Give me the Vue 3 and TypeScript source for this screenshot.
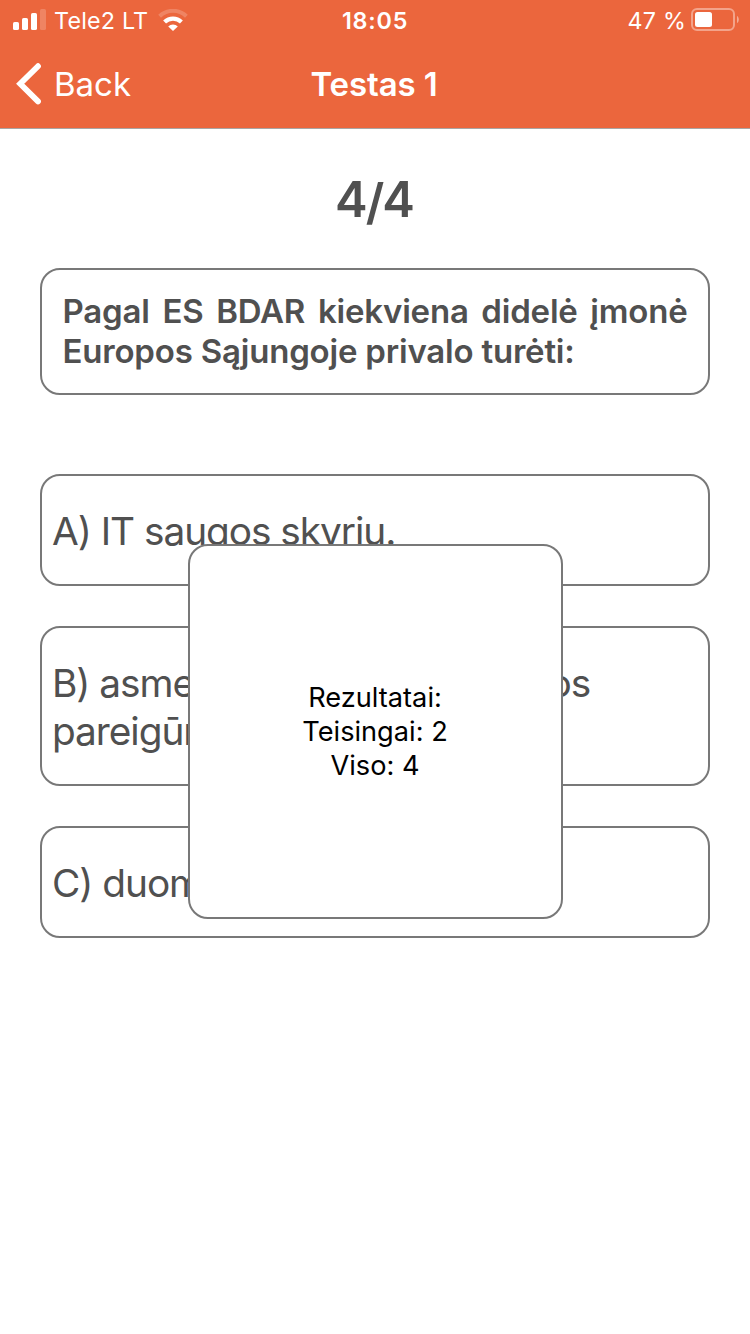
<script setup lang="ts">
interface Option {
  key: string
  label: string
}

const question = 'Pagal ES BDAR kiekviena didelė įmonė Europos Sąjungoje privalo turėti:'
const options: Option[] = [
  { key: 'A', label: 'IT saugos skyrių.' },
  { key: 'B', label: 'asmens duomenų apsaugos pareigūną.' },
  { key: 'C', label: 'duomenų bazę.' },
]
const results: string[] = ['Rezultatai:', 'Teisingai: 2', 'Viso: 4']
</script>

<template>
  <div class="screen">
    <header class="header">
      <div class="status">
        <div class="side">
          <svg class="signal" width="34" height="22" viewBox="0 0 34 22" fill="#fff">
            <rect x="0" y="13" width="6" height="8" rx="1.6" />
            <rect x="9" y="9" width="6" height="12" rx="1.6" />
            <rect x="18" y="4" width="6" height="17" rx="1.6" />
            <rect x="27" y="0" width="6" height="21" rx="1.6" opacity="0.2" />
          </svg>
          <span class="carrier">Tele2 LT</span>
          <svg class="wifi" width="30" height="22" viewBox="0 0 30 22" fill="none">
            <path d="M1.6 7.2 A19.3 19.3 0 0 1 28.4 7.2" stroke="#fff" stroke-width="4" opacity="0.2" />
            <path d="M6.6 13 A12.2 12.2 0 0 1 23.4 13" stroke="#fff" stroke-width="4.2" />
            <path d="M15 22 L10.2 17.6 A6.8 6.8 0 0 1 19.8 17.6 Z" fill="#fff" />
          </svg>
        </div>
        <span class="clock">18:05</span>
        <div class="side end">
          <span class="percent">47 %</span>
          <svg class="battery" width="48" height="24" viewBox="0 0 48 24">
            <rect x="1" y="1" width="42" height="21" rx="5" fill="none" stroke="#fff" stroke-width="2" opacity="0.4" />
            <rect x="4" y="4" width="17" height="15" rx="2.5" fill="#fff" />
            <path d="M46 8 C48.4 9 48.4 14 46 15 Z" fill="#fff" opacity="0.45" />
          </svg>
        </div>
      </div>
      <nav class="nav">
        <button class="back">
          <svg width="26" height="42" viewBox="0 0 26 42" fill="none">
            <path d="M22 3.2 L4.2 20.8 L22 38.4" stroke="#fff" stroke-width="5.8" stroke-linecap="round" stroke-linejoin="miter" />
          </svg>
          <span>Back</span>
        </button>
        <h1 class="title">Testas 1</h1>
        <span></span>
      </nav>
    </header>

    <main class="content">
      <div class="counter">4<span class="slash">/</span>4</div>
      <p class="question">{{ question }}</p>
      <div class="options">
        <div v-for="o in options" :key="o.key" class="option">{{ o.key }}) {{ o.label }}</div>
      </div>
    </main>

    <div class="modal">
      <span v-for="line in results" :key="line">{{ line }}</span>
    </div>
  </div>
</template>

<style>
body {
  margin: 0;
  background: #fff;
}
</style>

<style scoped>
.screen {
  position: relative;
  box-sizing: border-box;
  width: 750px;
  height: 1334px;
  overflow: hidden;
  background: #fff;
  color: #505050;
  font-family: Inter, 'Noto Sans', sans-serif;
}

.header {
  box-sizing: border-box;
  height: 129px;
  background: #eb663d;
  border-bottom: 1px solid #a9a5a4;
  color: #fff;
}

.status {
  display: grid;
  grid-template-columns: 1fr auto 1fr;
  height: 40px;
  font-size: 23.3px;
  line-height: 42px;
}

.side {
  display: flex;
  align-items: flex-start;
  padding-left: 13px;
  white-space: nowrap;
}

.end {
  justify-content: flex-end;
  padding: 0 11px 0 0;
}

.signal {
  margin-top: 9px;
}

.carrier {
  margin-left: 7px;
  letter-spacing: 0.2px;
}

.wifi {
  margin: 9px 0 0 10px;
}

.clock {
  font-weight: 600;
  letter-spacing: 0.8px;
}

.percent {
  margin-right: 5px;
  letter-spacing: 0.2px;
}

.battery {
  margin-top: 8px;
}

.nav {
  display: grid;
  grid-template-columns: 1fr auto 1fr;
  height: 88px;
  line-height: 88px;
}

.back {
  display: flex;
  align-items: center;
  gap: 12px;
  padding: 0 0 0 16px;
  border: 0;
  background: none;
  color: inherit;
  font: inherit;
  font-size: 33px;
  line-height: 88px;
}

.title {
  margin: 0;
  padding-right: 2px;
  font-size: 33px;
  font-weight: 600;
  letter-spacing: -0.1px;
}

.content {
  padding: 41px 40px 0;
}

.counter {
  height: 58px;
  padding-right: 2px;
  font-size: 49px;
  font-weight: 600;
  line-height: 60px;
  letter-spacing: -2px;
  text-align: center;
}

.slash {
  position: relative;
  top: 2px;
}

.question {
  box-sizing: border-box;
  height: 127px;
  margin: 40px 0 79px;
  padding: 21px 20.5px 0;
  border: 2px solid #787878;
  border-radius: 20px;
  font-size: 33px;
  font-weight: 600;
  line-height: 40px;
  letter-spacing: -0.2px;
  text-align: justify;
}

.options {
  display: flex;
  flex-direction: column;
  gap: 40.2px;
}

.option {
  padding: 31.3px 10px 29.3px;
  border: 2px solid #787878;
  border-radius: 20px;
  font-size: 38.8px;
  line-height: 47.4px;
  letter-spacing: -1.04px;
}

.modal {
  position: absolute;
  top: 544px;
  left: 188px;
  display: flex;
  flex-direction: column;
  align-items: center;
  justify-content: center;
  box-sizing: border-box;
  width: 375px;
  height: 375px;
  padding-right: 1px;
  border: 2px solid #787878;
  border-radius: 20px;
  background: #fff;
  color: #000;
  font-size: 27.2px;
  line-height: 34px;
}
</style>
